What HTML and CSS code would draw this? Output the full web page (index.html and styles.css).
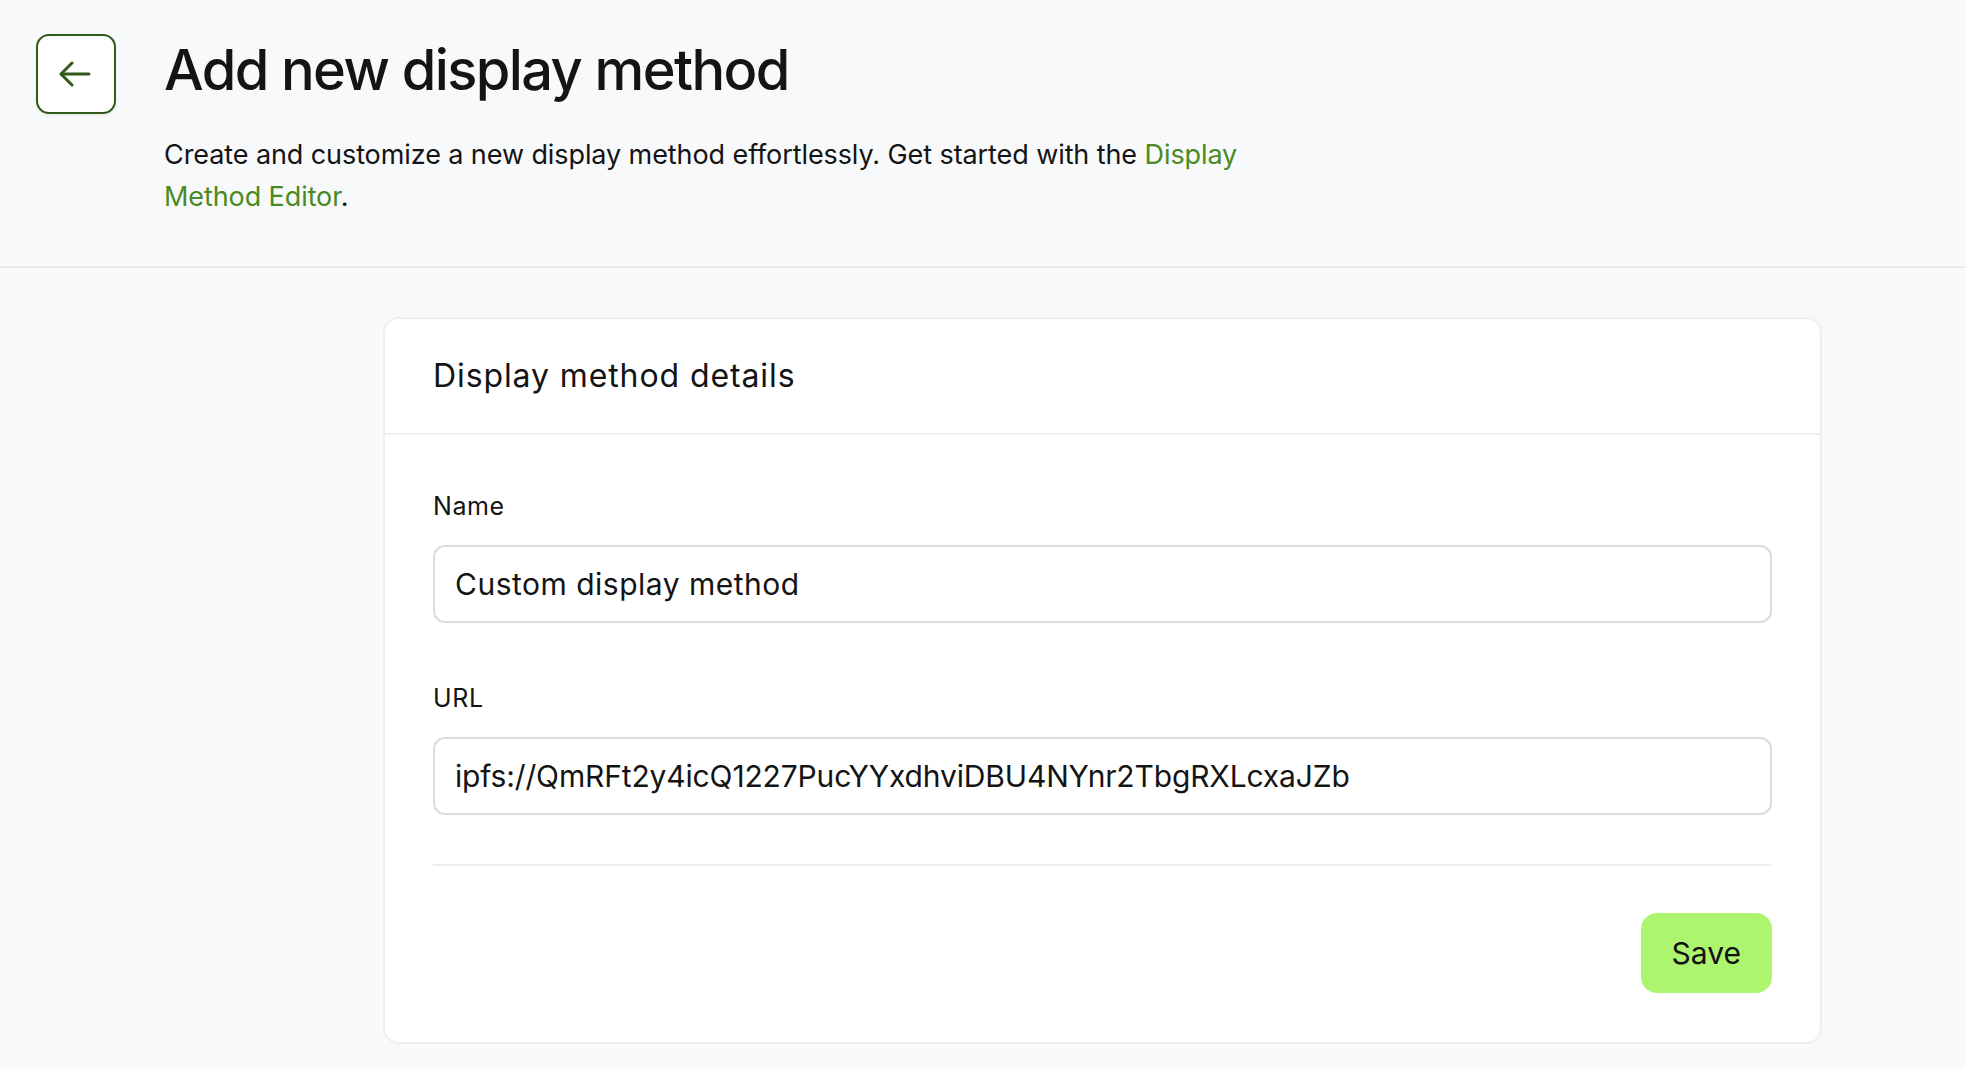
FILE: index.html
```html
<!DOCTYPE html>
<html lang="en">
<head>
<meta charset="utf-8">
<title>Add new display method</title>
<link rel="stylesheet" href="styles.css">
</head>
<body>
  <header class="page-header">
    <button class="back-btn" type="button" aria-label="Back">
      <svg class="back-icon" viewBox="0 0 32 26" width="32" height="26" fill="none" stroke="currentColor" stroke-width="3" stroke-linecap="round" stroke-linejoin="round">
        <path d="M13 2 L2 13 L13 24"/>
        <path d="M2.5 13 H30"/>
      </svg>
    </button>
    <div class="head-text">
      <h1 class="title">Add new display method</h1>
      <p class="desc">Create and customize a new display method effortlessly. Get started with the <a class="link" href="#">Display Method Editor</a>.</p>
    </div>
  </header>

  <main class="content">
    <section class="card">
      <div class="card-head">
        <h2 class="card-title">Display method details</h2>
      </div>
      <div class="card-body">
        <div class="field">
          <label class="label" for="name">Name</label>
          <input class="input input-name" id="name" type="text" value="Custom display method">
        </div>
        <div class="field">
          <label class="label" for="url">URL</label>
          <input class="input input-url" id="url" type="text" value="ipfs://QmRFt2y4icQ1227PucYYxdhviDBU4NYnr2TbgRXLcxaJZb">
        </div>
        <div class="divider"></div>
        <div class="actions">
          <button class="save-btn" type="button">Save</button>
        </div>
      </div>
    </section>
  </main>
</body>
</html>
```

FILE: styles.css
```css
* { box-sizing: border-box; }

html, body {
  margin: 0;
  padding: 0;
  background: #f8f9fb;
  color: #141414;
  font-family: Inter, "Noto Sans", "Liberation Sans", sans-serif;
}

.page-header {
  display: flex;
  align-items: flex-start;
  gap: 48px;
  padding: 34px 36px 48px;
  border-bottom: 2px solid #e9ebee;
}

.back-btn {
  flex: none;
  width: 80px;
  height: 80px;
  border: 2px solid #2f5a17;
  border-radius: 13px;
  background: #ffffff;
  color: #2f5a17;
  display: flex;
  align-items: center;
  justify-content: center;
  padding: 0;
  cursor: pointer;
  box-shadow: 0 2px 3px rgba(0, 0, 0, 0.05);
}

.back-icon { display: block; margin-left: -2px; }

.head-text { padding-top: 3px; }

.title {
  margin: 0;
  font-size: 56px;
  line-height: 67px;
  font-weight: 500;
  letter-spacing: -1.6px;
  color: #141414;
}

.desc {
  margin: 30px 0 0;
  max-width: 1100px;
  font-size: 27px;
  line-height: 42px;
  font-weight: 400;
  letter-spacing: -0.09px;
  color: #141414;
}

.link {
  color: #4a8a22;
  text-decoration: none;
}

.content {
  padding: 49px 0 40px 383px;
}

.card {
  width: 1439px;
  background: #ffffff;
  border: 2px solid #eeeff1;
  border-radius: 16px;
}

.card-head {
  padding: 37px 48px;
  border-bottom: 2px solid #f0f0f0;
}

.card-title {
  margin: 0;
  font-size: 32px;
  line-height: 40px;
  font-weight: 400;
  letter-spacing: 0.9px;
  color: #141414;
}

.card-body {
  padding: 56px 48px 49px 48px;
  display: flex;
  flex-direction: column;
}

.field {
  display: flex;
  flex-direction: column;
  gap: 24px;
}

.field + .field { margin-top: 60px; }

.label {
  font-size: 25px;
  line-height: 30px;
  letter-spacing: 0.6px;
  color: #141414;
}

.input {
  width: 100%;
  height: 78px;
  border: 2px solid #dcdcdc;
  border-radius: 12px;
  padding: 0 20px;
  font-family: inherit;
  font-size: 30px;
  color: #141414;
  background: #ffffff;
  outline: none;
}

.input-name { letter-spacing: 0.5px; }
.input-url { letter-spacing: -0.15px; }

.divider {
  margin-top: 49px;
  height: 2px;
  background: #eeeeee;
}

.actions {
  display: flex;
  justify-content: flex-end;
  margin-top: 47px;
}

.save-btn {
  height: 80px;
  padding: 0 31px;
  border: none;
  border-radius: 16px;
  background: #adf46f;
  color: #111111;
  font-family: inherit;
  font-size: 30px;
  font-weight: 400;
  cursor: pointer;
}
```
